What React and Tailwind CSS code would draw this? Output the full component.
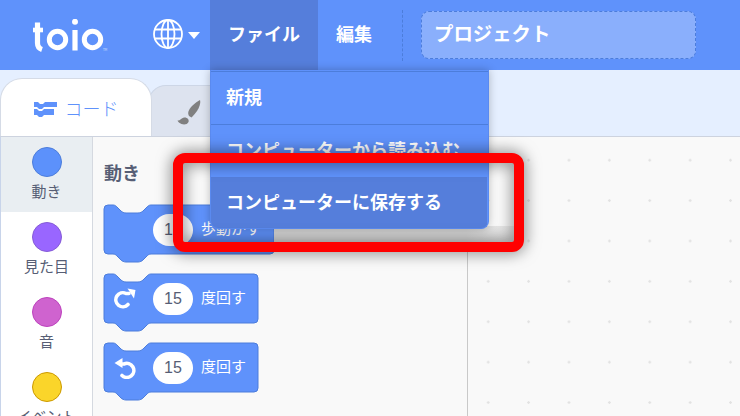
const jp = 'font-["Noto_Sans_CJK_JP","Liberation_Sans",sans-serif]';

const categories = [
  { label: '動き', circle: 'bg-[#5c91fb] border-[#4c7ddb]', active: true },
  { label: '見た目', circle: 'bg-[#9966ff] border-[#855cd6]' },
  { label: '音', circle: 'bg-[#cf63cf] border-[#bd42bd]' },
  { label: 'イベント', circle: 'bg-[#fad52a] border-[#cc9900]' },
];

function ToioLogo() {
  return (
    <svg width="76" height="34" viewBox="0 0 76 34" className="text-white">
      <g fill="none" stroke="currentColor" strokeWidth="5">
        <path d="M4.5 3.5 V24 C4.5 27 6 29.5 9 30.5" strokeWidth="5.2" />
        <path d="M0 11 H10" strokeWidth="4.6" />
        <circle cx="24.5" cy="20.5" r="8.2" />
        <path d="M42 11 V31.5" strokeWidth="5.2" />
        <circle cx="59.5" cy="20.5" r="8.2" />
      </g>
      <circle cx="42" cy="2.8" r="3" fill="currentColor" />
      <text x="70" y="31.5" fontSize="3" fill="#dbe6fe">TM</text>
    </svg>
  );
}

function Globe() {
  return (
    <svg width="32" height="32" viewBox="0 0 32 32" fill="none" stroke="#fff" strokeWidth="1.8">
      <circle cx="16" cy="16" r="14" />
      <ellipse cx="16" cy="16" rx="6.5" ry="14" />
      <path d="M16 2 V30 M2.5 11.5 H29.5 M2.5 20.5 H29.5" />
    </svg>
  );
}

function BlockShape({ width }) {
  return (
    <svg width={width + 2} height="60" viewBox={`-1 -1 ${width + 2} 60`} className="absolute left-[-1px] top-[-1px]">
      <path
        d={`M0 4 a4 4 0 0 1 4-4 H9 c2 0 3 1 4 2 l4 4 c1 1 3 2 5 2 H34 c2 0 4-1 5-2 l4-4 c1-1 2-2 4-2 H${width - 4} a4 4 0 0 1 4 4 V45 a4 4 0 0 1-4 4 H47 c-2 0-3 1-4 2 l-4 4 c-1 1-3 2-5 2 H22 c-2 0-4-1-5-2 l-4-4 c-1-1-2-2-4-2 H4 a4 4 0 0 1-4-4 z`}
        fill="#5f92fb"
        stroke="#4c7ddb"
        strokeWidth="1"
      />
    </svg>
  );
}

function TurnRight() {
  return (
    <svg width="22" height="22" viewBox="0 0 22 22" fill="none">
      <path d="M14 16.5 A7 7 0 1 1 12 5.5 H15" stroke="#fff" strokeWidth="3.6" strokeLinecap="round" />
      <path d="M13.5 0.5 L21.5 2 L20 10.5 Z" fill="#fff" />
    </svg>
  );
}

function TurnLeft() {
  return (
    <svg width="22" height="22" viewBox="0 0 22 22" fill="none">
      <path d="M8 18.5 A7 7 0 1 0 10 7 H7" stroke="#fff" strokeWidth="3.6" strokeLinecap="round" />
      <path d="M8.5 1 L0.5 6 L8.5 11 Z" fill="#fff" />
    </svg>
  );
}

function Block({ icon, value, label, width, className }) {
  return (
    <div className={`relative flex h-[49px] items-center ${className}`}>
      <BlockShape width={width} />
      <div className="relative flex h-[32px] w-full items-center pl-[10px]">
        <div className="flex w-[39px] shrink-0 justify-start">{icon}</div>
        <div className='flex h-[32px] w-[40px] shrink-0 items-center justify-center rounded-full bg-white font-["Liberation_Sans",sans-serif] text-[16px] text-[#575e75]'>
          {value}
        </div>
        <span className="ml-[8px] whitespace-nowrap pb-[2px] text-[15px] text-white">{label}</span>
      </div>
    </div>
  );
}

function FileMenu() {
  return (
    <div className="absolute left-[210px] top-[70px] z-10 w-[279px] overflow-hidden rounded-b-[8px] border-x border-b border-[#5a8af0] bg-[#5f92fb] pt-[1px] text-[18px] font-bold text-white shadow-[0_0_8px_rgba(0,0,0,0.25)]">
      <div className="h-[1px] bg-[#4c7ddb]" />
      <div className="flex h-[52px] items-center pb-[3px] pl-[15px]">新規</div>
      <div className="h-[1px] bg-[#4c7ddb]" />
      <div className="flex h-[52px] items-center pb-[3px] pl-[15px]">コンピューターから読み込む</div>
      <div className="mr-[1px] flex h-[51px] items-center bg-[#557edb] pb-[3px] pl-[15px]">コンピューターに保存する</div>
    </div>
  );
}

export default function App() {
  return (
    <div className={`relative flex h-[416px] w-[740px] flex-col overflow-hidden bg-[#f9f9f9] ${jp}`}>
      {/* Header */}
      <div className="flex h-[70px] shrink-0 items-center bg-[#5f92fb] text-white">
        <div className="ml-[33px] w-[119px] pt-[1px]">
          <ToioLogo />
        </div>
        <div className="pb-[2px]">
          <Globe />
        </div>
        <div className="ml-[4px] h-0 w-0 border-x-[6.5px] border-t-[7px] border-x-transparent border-t-white" />
        <div className="ml-[10px] flex h-full w-[108px] items-center justify-center bg-[#557edb] pb-[4px] text-[18px] font-bold">
          ファイル
        </div>
        <div className="ml-[18px] pb-[4px] text-[18px] font-bold">編集</div>
        <div className="ml-[30px] h-[51px] border-l border-dashed border-[#4c7ddb]" />
        <div className="ml-[18px] flex h-[48px] w-[275px] items-center rounded-[8px] border border-dashed border-[#4c7ddb] bg-[#8aaffc] pb-[5px] pl-[12px] text-[19.4px] font-bold">
          プロジェクト
        </div>
      </div>

      {/* Tabs */}
      <div className="flex h-[67px] shrink-0 items-end border-b border-[#cdd3df] bg-[#e5efff]">
        <div className="relative z-[1] flex h-[58px] w-[152px] items-center justify-center gap-[8px] rounded-t-[22px] border border-b-0 border-[#d5dbe6] bg-white pt-[2px] text-[#5f92fb]">
          <svg width="23" height="16" viewBox="0 0 23 16" fill="#5f92fb">
            <path d="M0 1 H4 L6 3 H9 L11 1 H23 V6 H10 L8 8 H5 L3 6 H0 Z" />
            <path d="M0 8 H3 L5 10 H8 L10 8 H20 V14 H10 L8 16 H5 L3 14 H0 Z" />
          </svg>
          <span className="text-[18px] font-light">コード</span>
        </div>
        <div className="ml-[-4px] flex h-[51px] w-[110px] items-center rounded-t-[18px] border border-b-0 border-[#cdd6e6] bg-[#dde3ef] pl-[28px] pt-[2px]">
          <svg width="24" height="25" viewBox="0 0 24 25" fill="#808080">
            <path d="M12 16 C10 13 12 9 15 6 C18 3 21 1 23 0 C24 3 22 8 20 11 C18 14 16 16 14.5 17.5 Z" />
            <path d="M0.5 20.5 C3 21 4 18 7 17.5 C10 17 12.5 19.5 11.5 22 C10.5 24.5 7 25 4.5 24 C2.5 23 1 22 0.5 20.5 Z" />
          </svg>
        </div>
      </div>

      {/* Editor */}
      <div className="flex min-h-0 flex-1">
        <div className="w-[93px] shrink-0 border-x border-l-[#c8d4ea] border-r-[#d5d9e0] bg-white text-[#575e75]">
          {categories.map(cat => (
            <div
              key={cat.label}
              className={`flex h-[75px] flex-col items-center pt-[10px] ${cat.active ? 'bg-[#e9eef2]' : ''}`}
            >
              <div className={`h-[30px] w-[30px] shrink-0 rounded-full border ${cat.circle}`} />
              <span className="mt-[2px] whitespace-nowrap text-[15px] leading-[24px]">{cat.label}</span>
            </div>
          ))}
        </div>

        <div className="w-[375px] shrink-0 border-r border-[#c9c9c9] bg-[#f9f9f9] pl-[11px] pt-[21px]">
          <div className="text-[18px] font-bold leading-[28px] text-[#575e75]">動き</div>
          <Block value="10" label="歩動かす" width={170} className="mt-[19px]" />
          <Block value="15" label="度回す" width={154} className="mt-[20px]" icon={<TurnRight />} />
          <Block value="15" label="度回す" width={154} className="mt-[20px]" icon={<TurnLeft />} />
        </div>

        <div className="flex-1 bg-[#f9f9f9] bg-[radial-gradient(circle,#e2e2e2_1px,transparent_1.5px)] bg-[size:40.4px_40.4px] bg-[position:0_3px]" />
      </div>

      <FileMenu />

      <div className="pointer-events-none absolute left-[274px] top-[226px] z-[5] h-[18px] w-[240px] bg-gradient-to-r from-[#d8d8d8] via-[#d8d8d8] via-[80%] to-[#ececec]" />

      {/* Red annotation frame */}
      <div className="pointer-events-none absolute left-[173px] top-[153px] z-20 h-[99px] w-[351px] rounded-[12px] border-[10px] border-[#ff0000] drop-shadow-[0_0_8px_rgba(0,0,0,0.6)]" />
    </div>
  );
}
